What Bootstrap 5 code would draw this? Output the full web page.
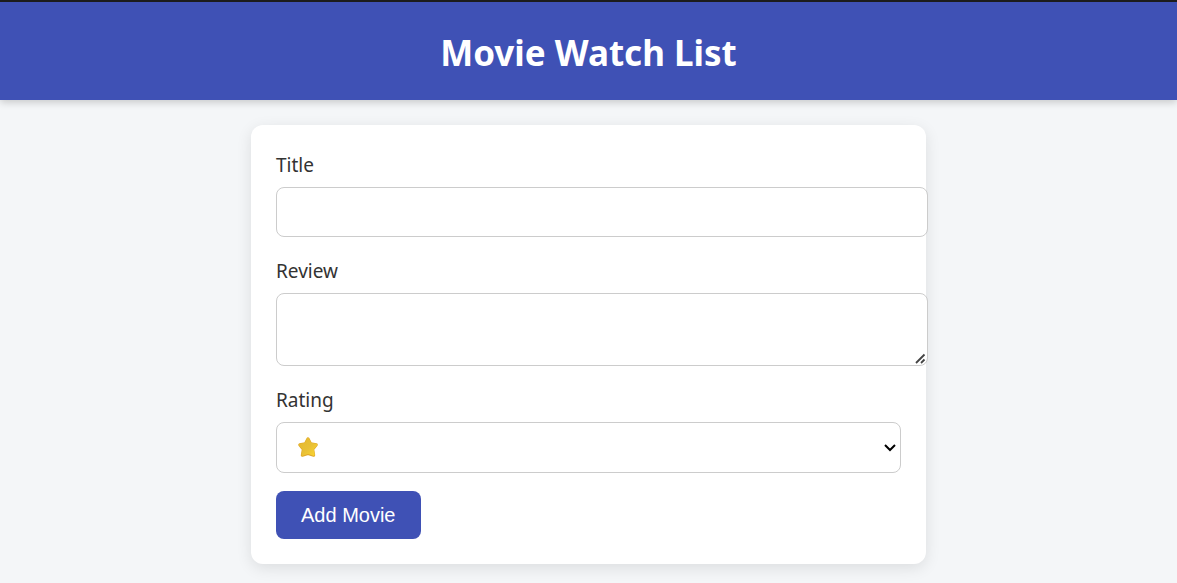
<!DOCTYPE html>
<html lang="en">
<head>
<meta charset="utf-8">
<meta name="viewport" content="width=device-width, initial-scale=1">
<title>Movie Watch List</title>
<link href="https://cdn.jsdelivr.net/npm/bootstrap@5.3.0/dist/css/bootstrap.min.css" rel="stylesheet">
<style>
  body { background: #f4f6f8; color: #333; font-family: "Segoe UI", "Noto Sans", sans-serif; }
  .site-header { background: #3f51b5; border-top: 2px solid #1c1c1c; padding: 26px 0 22px; box-shadow: 0 2px 8px rgba(0,0,0,.2); }
  .site-header h1 { font-size: 35px; line-height: 50px; font-weight: 700; }
  .movie-form { max-width: 675px; padding: 25px; border-radius: 12px; box-shadow: 0 4px 15px rgba(0,0,0,.1); }
  main { padding: 25px 0; }
  .form-label { font-size: 19px; line-height: 30px; margin-bottom: 7px; }
  .field { margin-bottom: 19px; }
  .form-control, .form-select { border: 1px solid #ccc; border-radius: 8px; font-size: 20px; padding: 12px; background-color: #fff; }
  /* text boxes run past the card's inner edge */
  .form-control { width: calc(100% + 27px); }
  input.form-control { height: 50px; }
  textarea.form-control { display: block; height: 73px; min-height: 73px; resize: vertical; }
  textarea::-webkit-resizer { background: url("data:image/svg+xml,%3Csvg xmlns='http://www.w3.org/2000/svg' width='15' height='15'%3E%3Cpath d='M4 13L12.500 4.500M9 13L12.500 9.500' stroke='%23444' stroke-width='1.800'/%3E%3C/svg%3E") no-repeat right bottom; }
  .form-select { height: 51px; background-image: none; color: transparent; }
  .star-icon, .caret-icon { position: absolute; pointer-events: none; }
  .star-icon { left: 21px; top: 14px; }
  .caret-icon { right: 4px; top: 21px; }
  .btn-add { margin-top: 18px; background: #3f51b5; color: #fff; border: 0; border-radius: 8px; font: 20px/24px "Liberation Sans", Arial, sans-serif; padding: 12px 25px; }
  .btn-add:hover { background: #32408f; color: #fff; }
</style>
</head>
<body>
<header class="site-header text-center text-white position-relative">
  <h1 class="m-0">Movie Watch List</h1>
</header>
<main>
  <form class="movie-form bg-white mx-auto">
    <div class="field">
      <label class="form-label d-block" for="title">Title</label>
      <input class="form-control" type="text" id="title">
    </div>
    <div class="field">
      <label class="form-label d-block" for="review">Review</label>
      <textarea class="form-control" id="review"></textarea>
    </div>
    <div>
      <label class="form-label d-block" for="rating">Rating</label>
      <div class="position-relative">
        <select class="form-select" id="rating">
          <option value="1" aria-label="1 star" selected></option>
          <option value="2" aria-label="2 stars"></option>
          <option value="3" aria-label="3 stars"></option>
          <option value="4" aria-label="4 stars"></option>
          <option value="5" aria-label="5 stars"></option>
        </select>
        <svg class="star-icon" width="22" height="22" viewBox="0 0 22 22" aria-hidden="true">
          <defs><linearGradient id="gold" x1="0" y1="0" x2="1" y2="1"><stop offset="0" stop-color="#e6b92c"/><stop offset=".55" stop-color="#e8c036"/><stop offset="1" stop-color="#fbd52f"/></linearGradient></defs>
          <path d="M11 2.800 L13.600 7.800 L19.300 8.800 L15.700 13.200 L16.700 19.300 L11 17.600 L5.300 19.300 L6.300 13.200 L2.700 8.800 L8.400 7.800Z" fill="#e0a82a" stroke="#e0a82a" stroke-width="3" stroke-linejoin="round"/>
          <path d="M11 2.800 L13.600 7.800 L19.300 8.800 L15.700 13.200 L16.700 18.800 L11 16.800 L5.500 18.800 L6.500 13.200 L2.900 8.800 L8.400 7.800Z" fill="url(#gold)" stroke="url(#gold)" stroke-width="2" stroke-linejoin="round"/>
        </svg>
        <svg class="caret-icon" width="14" height="10" viewBox="0 0 14 10" aria-hidden="true"><path d="M2 2 L7 7 L12 2" fill="none" stroke="#000" stroke-width="2"/></svg>
      </div>
    </div>
    <button class="btn btn-add d-block" type="submit">Add Movie</button>
  </form>
</main>
<script src="https://cdn.jsdelivr.net/npm/bootstrap@5.3.0/dist/js/bootstrap.bundle.min.js"></script>
</body>
</html>
